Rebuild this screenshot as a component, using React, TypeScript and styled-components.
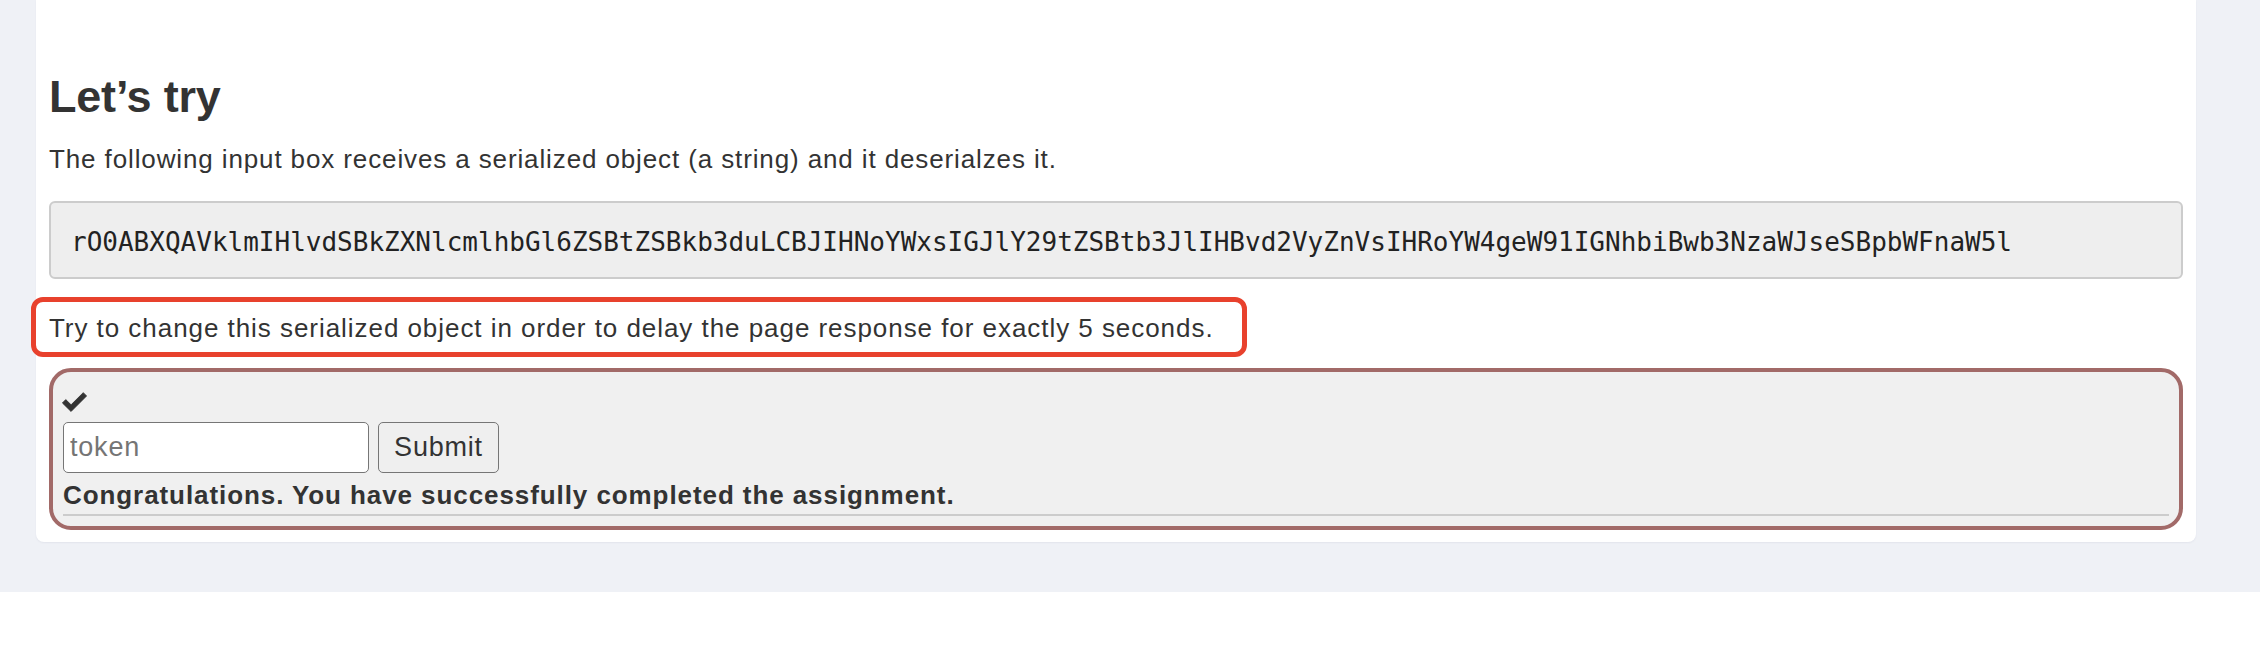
import React from "react";
import styled, { createGlobalStyle } from "styled-components";

const GlobalStyle = createGlobalStyle`
  html, body {
    margin: 0;
    padding: 0;
    background: #ffffff;
  }
  body {
    font-family: "Liberation Sans", Arial, Helvetica, sans-serif;
    color: #333333;
  }
  * { box-sizing: border-box; }
`;

const Page = styled.div`
  background: #eff1f6;
  padding: 0 64px 50px 36px;
`;

const Card = styled.section`
  background: #ffffff;
  border-radius: 0 0 8px 8px;
  box-shadow: 0 1px 2px rgba(30, 40, 80, 0.06);
  padding: 72px 13px 12px 13px;
  display: flex;
  flex-direction: column;
  align-items: stretch;
`;

const Heading = styled.h2`
  margin: 0;
  font-size: 45px;
  line-height: 49px;
  font-weight: 700;
  letter-spacing: -0.2px;
  color: #333333;
`;

const Paragraph = styled.p`
  margin: 20px 0 0 0;
  font-size: 26px;
  line-height: 37px;
  letter-spacing: 0.88px;
  color: #333333;
`;

const CodeBox = styled.pre`
  margin: 23px 0 0 0;
  background: #eeeeee;
  border: 2px solid #cccccc;
  border-radius: 6px;
  padding: 21px 21px 17px 20px;
  font-family: "DejaVu Sans Mono", "Liberation Mono", monospace;
  font-size: 26px;
  line-height: 36px;
  color: #222222;
  white-space: pre;
  overflow: hidden;
`;

const Highlight = styled.p`
  align-self: flex-start;
  margin: 18px 0 0 -18px;
  border: 5px solid #e8412d;
  border-radius: 12px;
  padding: 8px 28px 5px 13px;
  font-size: 26px;
  line-height: 37px;
  letter-spacing: 0.95px;
  color: #333333;
`;

const Assignment = styled.div`
  margin-top: 11px;
  background: #f0f0f0;
  border: 4px solid #a26a68;
  border-radius: 22px;
  padding: 20px 10px 10px 10px;
  display: flex;
  flex-direction: column;
`;

const CheckIcon = styled.svg`
  display: block;
  width: 25px;
  height: 20px;
  margin-left: -1px;
  color: #333333;
`;

const FormRow = styled.form`
  margin-top: 10px;
  display: flex;
  align-items: stretch;
  gap: 9px;
  height: 51px;
`;

const TokenInput = styled.input`
  width: 306px;
  height: 51px;
  margin: 0;
  border: 1.5px solid #767676;
  border-radius: 5px;
  background: #ffffff;
  padding: 0 6px;
  font-family: "Liberation Sans", Arial, sans-serif;
  font-size: 27px;
  letter-spacing: 0.8px;
  color: #333333;
  &::placeholder {
    color: #757575;
  }
`;

const SubmitButton = styled.button`
  width: 121px;
  height: 51px;
  margin: 0;
  border: 1.5px solid #767676;
  border-radius: 5px;
  background: #efefef;
  font-family: "Liberation Sans", Arial, sans-serif;
  font-size: 27px;
  letter-spacing: 0.8px;
  color: #333333;
  padding: 0;
`;

const Feedback = styled.div`
  margin-top: 4px;
  font-size: 26px;
  line-height: 37px;
  font-weight: 700;
  letter-spacing: 0.92px;
  color: #333333;
`;

const Divider = styled.div`
  height: 2px;
  background: #cccccc;
`;

const code =
  "rO0ABXQAVklmIHlvdSBkZXNlcmlhbGl6ZSBtZSBkb3duLCBJIHNoYWxsIGJlY29tZSBtb3JlIHBvd2VyZnVsIHRoYW4geW91IGNhbiBwb3NzaWJseSBpbWFnaW5l";

export default function App() {
  return (
    <>
      <GlobalStyle />
      <Page>
        <Card>
          <Heading>Let’s try</Heading>
          <Paragraph>
            The following input box receives a serialized object (a string) and it deserialzes it.
          </Paragraph>
          <CodeBox>{code}</CodeBox>
          <Highlight>
            Try to change this serialized object in order to delay the page response for exactly 5 seconds.
          </Highlight>
          <Assignment>
            <CheckIcon viewBox="0 0 24 19" aria-hidden="true">
              <path
                d="M0.4 10.4 L3.6 7.2 L8.7 12.2 L20.4 0.5 L23.6 3.7 L8.7 18.6 Z"
                fill="currentColor"
                stroke="currentColor"
                strokeWidth="0.8"
                strokeLinejoin="round"
              />
            </CheckIcon>
            <FormRow onSubmit={(e) => e.preventDefault()}>
              <TokenInput type="text" placeholder="token" />
              <SubmitButton type="submit">Submit</SubmitButton>
            </FormRow>
            <Feedback>Congratulations. You have successfully completed the assignment.</Feedback>
            <Divider />
          </Assignment>
        </Card>
      </Page>
    </>
  );
}
